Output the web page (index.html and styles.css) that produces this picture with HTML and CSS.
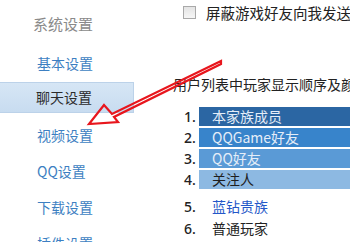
FILE: index.html
```html
<!DOCTYPE html>
<html>
<head>
    <title>系统设置</title>
    <link rel="stylesheet" href="styles.css">
</head>
<body>
    <div class="page">
        <div class="sidebar">
            <div class="side-title">系统设置</div>
            <div class="side-item">基本设置</div>
            <div class="side-item active"><span>聊天设置</span></div>
            <div class="side-item">视频设置</div>
            <div class="side-item">QQ设置</div>
            <div class="side-item">下载设置</div>
            <div class="side-item">插件设置</div>
        </div>

        <div class="main">
            <label class="check-row">
                <span class="checkbox"></span>
                <span class="check-text">屏蔽游戏好友向我发送消息</span>
            </label>

            <div class="order-title">用户列表中玩家显示顺序及颜色</div>

            <ol class="order-list">
                <li class="row"><span class="num">1.</span><span class="bar bar1">本家族成员</span></li>
                <li class="row"><span class="num">2.</span><span class="bar bar2">QQGame好友</span></li>
                <li class="row"><span class="num">3.</span><span class="bar bar3">QQ好友</span></li>
                <li class="row"><span class="num">4.</span><span class="bar bar4">关注人</span></li>
                <li class="row plain first-plain"><span class="num">5.</span><span class="label blue">蓝钻贵族</span></li>
                <li class="row plain"><span class="num">6.</span><span class="label">普通玩家</span></li>
            </ol>
        </div>
    </div>

    <!-- red arrow drawn over the screenshot -->
    <svg class="arrow" width="350" height="242" viewBox="0 0 350 242">
        <polygon points="221,61 112,114 104,105 89,124 118,122 114,117 221,64"
                 fill="none" stroke="#e8161d" stroke-width="2.2" stroke-linejoin="miter"/>
    </svg>
</body>
</html>
```

FILE: styles.css
```css
body {
    margin: 0;
    font-family: "Noto Sans CJK SC", "Noto Sans", sans-serif;
    background-color: #fff;
    color: #222;
    overflow: hidden;
}

.page {
    display: flex;
    width: 350px;
    height: 242px;
    overflow: hidden;
}

.sidebar {
    width: 134px;
    flex-shrink: 0;
}

.side-title {
    height: 43px;
    line-height: 44px;
    padding-top: 2px;
    padding-left: 33px;
    font-size: 15px;
    color: #8a8a8a;
}

.side-item {
    height: 36px;
    line-height: 36px;
    padding-left: 37px;
    font-size: 14px;
    color: #3d7fc2;
}

.side-item.active {
    padding-left: 0;
    padding-top: 1px;
    height: 35px;
}

.side-item.active span {
    display: block;
    height: 29px;
    line-height: 29px;
    padding-left: 36px;
    background: linear-gradient(#d6e6f5, #c8dcf0);
    border: 1px solid #bcd2e9;
    border-left: none;
    color: #2b2b2b;
}

.main {
    flex: 1;
    white-space: nowrap;
}

.check-row {
    display: flex;
    align-items: center;
    height: 24px;
    padding-left: 49px;
}

.checkbox {
    width: 11px;
    height: 11px;
    border: 1px solid #a9a9a9;
    background: linear-gradient(#e4e4e4, #f6f6f6);
    margin-right: 10px;
    flex-shrink: 0;
}

.check-text {
    font-size: 14.5px;
    color: #222;
}

.order-title {
    margin-top: 50px;
    padding-left: 39px;
    font-size: 14px;
    line-height: 20px;
    color: #222;
}

.order-list {
    list-style: none;
    margin: 13px 0 0 0;
    padding: 0 0 0 50px;
}

.row {
    display: flex;
    align-items: center;
    height: 19px;
    margin-bottom: 2px;
}

.num {
    width: 15px;
    font-family: "Noto Sans", sans-serif;
    font-size: 14px;
    font-weight: 500;
    color: #222;
}

.bar {
    flex: 1;
    height: 19px;
    line-height: 19px;
    padding-left: 13px;
    font-size: 14px;
    color: #e4edf8;
}

.bar1 { background-color: #2b66a3; }
.bar2 { background-color: #3884cb; }
.bar3 { background-color: #5a9ad6; }
.bar4 { background-color: #8db9e2; color: #1e1e1e; }

.plain {
    height: 22px;
    margin-bottom: 0;
}

.first-plain {
    margin-top: 6px;
}

.label {
    padding-left: 13px;
    font-size: 14px;
    color: #222;
}

.label.blue {
    color: #2457c8;
}

.arrow {
    position: absolute;
    left: 0;
    top: 0;
    pointer-events: none;
}
```
